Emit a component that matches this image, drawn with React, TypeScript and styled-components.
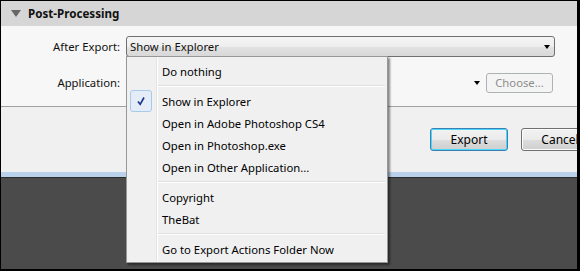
import styled, { createGlobalStyle } from "styled-components";

const Global = createGlobalStyle`
  html, body { margin: 0; padding: 0; background: #fff; }
  * { box-sizing: border-box; }
`;

const uiFont = `"Noto Sans", "Open Sans", sans-serif`;

const Frame = styled.div`
  position: relative;
  width: 580px;
  height: 271px;
  border: 1px solid #000;
  border-right-width: 3px;
  border-bottom-width: 2px;
  display: flex;
  flex-direction: column;
  background: #4b4b4b;
  overflow: hidden;
  font-family: ${uiFont};
  font-size: 11.3px;
  color: #111;
`;

const Header = styled.div`
  height: 25px;
  flex: none;
  background: #d6d6d6;
  display: flex;
  align-items: center;
  padding-left: 10px;
  gap: 7px;
  font-weight: 700;
  font-size: 11.6px;
  color: #111;
`;

const Caret = styled.span`
  width: 0;
  height: 0;
  border-left: 5px solid transparent;
  border-right: 5px solid transparent;
  border-top: 7px solid #666;
`;

const Body = styled.div`
  flex: none;
  height: 81px;
  background: #f7f7f7;
  padding-top: 10px;
  display: grid;
  grid-template-columns: 119px 1fr;
  grid-auto-rows: min-content;
  column-gap: 6px;
  row-gap: 15px;
  border-bottom: 1px solid #a0a0a0;
`;

const Label = styled.div`
  text-align: right;
  align-self: center;
  white-space: nowrap;
`;

const Select = styled.div`
  width: 429px;
  height: 21px;
  border: 1px solid #707070;
  border-radius: 3px;
  background: linear-gradient(#f5f5f5 0%, #eeeeee 50%, #e2e2e2 51%, #d8d8d8 100%);
  display: flex;
  align-items: center;
  justify-content: space-between;
  padding: 0 4px 0 3px;
`;

const Arrow = styled.span`
  width: 0;
  height: 0;
  border-left: 3.5px solid transparent;
  border-right: 3.5px solid transparent;
  border-top: 4px solid #000;
`;

const AppRow = styled.div`
  display: flex;
  align-items: center;
  justify-content: flex-end;
  gap: 6px;
  width: 427px;
  height: 21px;
`;

const ChooseButton = styled.div`
  width: 67px;
  height: 20px;
  border: 1px solid #adb2b5;
  border-radius: 3px;
  background: #f4f4f4;
  color: #8d8d8d;
  display: flex;
  align-items: center;
  justify-content: center;
`;

const Footer = styled.div`
  flex: none;
  height: 65px;
  background: #f0f0f0;
  display: flex;
  gap: 13px;
  padding: 21px 0 0 429px;
`;

const Button = styled.div<{ $focused?: boolean }>`
  flex: none;
  width: 78px;
  height: 23px;
  border: 1px solid ${({ $focused }) => ($focused ? "#3c7fb1" : "#707070")};
  border-radius: 3px;
  box-shadow: ${({ $focused }) => ($focused ? "inset 0 0 0 1px #48d8fb" : "inset 0 0 0 1px #fcfcfc")};
  background: linear-gradient(#f2f2f2 0%, #ebebeb 50%, #dddddd 51%, #cfcfcf 100%);
  display: flex;
  align-items: center;
  justify-content: center;
  font-size: 12px;
  color: #000;
`;

const BlueBar = styled.div`
  flex: none;
  height: 6px;
  background: #b9d1ea;
  border-bottom: 1px solid #2b2b2b;
`;

const Menu = styled.div`
  position: absolute;
  left: 125px;
  top: 55px;
  width: 262px;
  border: 1px solid #979797;
  background:
    linear-gradient(to right, transparent 29px, #e2e3e3 29px, #e2e3e3 30px, #ffffff 30px, #ffffff 31px, transparent 31px),
    #f0f0f0;
  box-shadow: 2px 2px 2px rgba(0, 0, 0, 0.45);
  padding: 3px 2px 2px;
  color: #000;
`;

const Item = styled.div`
  position: relative;
  height: 22px;
  display: flex;
  align-items: center;
  padding-left: 33px;
  white-space: nowrap;
`;

const CheckBox = styled.span`
  position: absolute;
  left: 1px;
  top: 0;
  width: 22px;
  height: 22px;
  border: 1px solid #a8c8ec;
  border-radius: 3px;
  background: #e4ecf7;
  display: flex;
  align-items: center;
  justify-content: center;
`;

const Separator = styled.div`
  height: 8px;
  display: flex;
  flex-direction: column;
  justify-content: center;
  padding-left: 29px;

  &::before {
    content: "";
    display: block;
    height: 1px;
    background: #e0e0e0;
  }
  &::after {
    content: "";
    display: block;
    height: 1px;
    background: #ffffff;
  }
`;

const Check = () => (
  <svg width="12" height="12" viewBox="0 0 12 12">
    <path d="M3 6.5 L5.2 9.3 L9 2.5" fill="none" stroke="#1c3a8c" strokeWidth="1.7" />
  </svg>
);

export default function App() {
  return (
    <>
      <Global />
      <Frame>
        <Header>
          <Caret />
          Post-Processing
        </Header>
        <Body>
          <Label>After Export:</Label>
          <Select>
            <span>Show in Explorer</span>
            <Arrow />
          </Select>
          <Label>Application:</Label>
          <AppRow>
            <Arrow />
            <ChooseButton>Choose...</ChooseButton>
          </AppRow>
        </Body>
        <Footer>
          <Button $focused>Export</Button>
          <Button>Cancel</Button>
        </Footer>
        <BlueBar />

        <Menu>
          <Item>Do nothing</Item>
          <Separator />
          <Item>
            <CheckBox>
              <Check />
            </CheckBox>
            Show in Explorer
          </Item>
          <Item>Open in Adobe Photoshop CS4</Item>
          <Item>Open in Photoshop.exe</Item>
          <Item>Open in Other Application...</Item>
          <Separator />
          <Item>Copyright</Item>
          <Item>TheBat</Item>
          <Separator />
          <Item>Go to Export Actions Folder Now</Item>
        </Menu>
      </Frame>
    </>
  );
}
